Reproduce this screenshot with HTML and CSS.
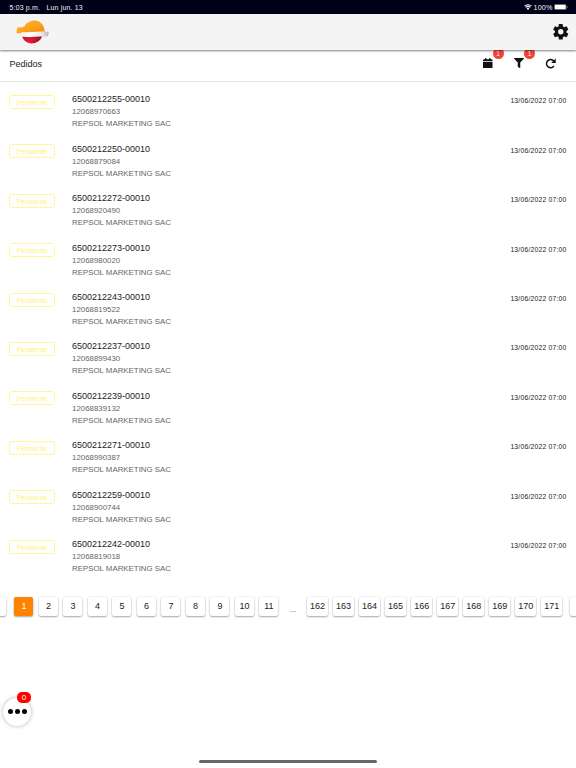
FILE: index.html
```html
<!DOCTYPE html>
<html lang="es">
<head>
<meta charset="utf-8">
<title>Pedidos</title>
<link rel="stylesheet" href="styles.css">
</head>
<body>
<div class="status"><span class="time">5:03 p.m.</span><span>Lun jun. 13</span>
<svg class="wifi" viewBox="0 0 16 12"><path d="M1 4.3a10 10 0 0 1 14 0M3.3 7a6.7 6.7 0 0 1 9.4 0" fill="none" stroke="#fff" stroke-width="2.1"/><path d="M8 12 5.2 9.1a4 4 0 0 1 5.6 0z" fill="#fff"/></svg>
<span class="percent">100%</span>
<svg class="battery" viewBox="0 0 28 12"><rect x=".5" y=".5" width="24" height="11" rx="3" fill="none" stroke="#9a9aa5"/><rect x="1.5" y="1.5" width="22" height="9" rx="2" fill="#fff"/><path d="M26 4v4q1.4-.6 1.4-2T26 4" fill="#9a9aa5"/></svg>
</div>
<header class="header">
<svg class="logo" viewBox="0 0 33 24">
<defs>
<linearGradient id="o" x1="0" y1="0" x2="1" y2="1"><stop offset="0" stop-color="#ffb52a"/><stop offset=".5" stop-color="#fba51c"/><stop offset="1" stop-color="#f28a10"/></linearGradient>
<linearGradient id="w" x1="0" x2="1"><stop offset="0" stop-color="#eee"/><stop offset=".3" stop-color="#fff"/><stop offset=".75" stop-color="#e8e8e8"/><stop offset="1" stop-color="#b5b5b8"/></linearGradient>
<linearGradient id="r" x1="0" x2="1"><stop offset="0" stop-color="#c5122a"/><stop offset=".4" stop-color="#e21b35"/><stop offset="1" stop-color="#8f1022"/></linearGradient>
</defs>
<path d="M1.500 7.500Q4.500 7.700 8.200 6.700C10.200 2.800 14.200.5 18.600.5c5.300 0 9.900 4.100 10.100 11.300L5.500 13.200H.6Q.2 10 1.500 7.500z" fill="url(#o)"/>
<path d="M5.900 15.800H26.300C24.600 21 20.100 23.400 15.800 23.400S7.200 20.900 5.900 15.800z" fill="url(#r)"/>
<path d="M5.200 12.300Q14 12.300 20 11.800t12.800 0q-.1 2.700-1.300 4.700-4-.2-7.500.1-8 .5-17.900.1-1-1.600-.9-4.900z" fill="url(#w)"/>
</svg>
<svg class="gear" viewBox="2 2 20 20"><path fill="#101010" d="M19.43 12.98c.04-.32.07-.64.07-.98s-.03-.66-.07-.98l2.11-1.65c.19-.15.24-.42.12-.64l-2-3.46c-.12-.22-.39-.3-.61-.22l-2.49 1c-.52-.4-1.08-.73-1.69-.98l-.38-2.65A.49.49 0 0 0 14 2h-4c-.25 0-.46.18-.49.42l-.38 2.65c-.61.25-1.17.59-1.69.98l-2.49-1c-.23-.09-.49 0-.61.22l-2 3.46c-.13.22-.07.49.12.64l2.11 1.65c-.04.32-.07.65-.07.98s.03.66.07.98l-2.11 1.65c-.19.15-.24.42-.12.64l2 3.46c.12.22.39.3.61.22l2.49-1c.52.4 1.08.73 1.69.98l.38 2.65c.03.24.24.42.49.42h4c.25 0 .46-.18.49-.42l.38-2.65c.61-.25 1.17-.59 1.69-.98l2.49 1c.23.09.49 0 .61-.22l2-3.46c.12-.22.07-.49-.12-.64zM12 15.5A3.5 3.5 0 1 1 12 8.500a3.500 3.500 0 0 1 0 7z"/></svg>
</header>
<section class="toolbar"><h1>Pedidos</h1>
<div class="tool"><svg class="calendar" viewBox="0 0 448 512" preserveAspectRatio="none"><path fill="#111" d="M0 464a48 48 0 0 0 48 48h352a48 48 0 0 0 48-48V192H0zM448 112a48 48 0 0 0-48-48h-48V12a12 12 0 0 0-12-12h-40a12 12 0 0 0-12 12v52H160V12a12 12 0 0 0-12-12h-40a12 12 0 0 0-12 12v52H48a48 48 0 0 0-48 48v48h448z"/></svg><b class="badge">1</b></div>
<div class="tool"><svg class="filter" viewBox="0 0 512 512"><path fill="#111" d="M488 0H24C2.700 0-8 25.900 7.100 41L192 225.900V432c0 7.800 3.800 15.200 10.200 19.700l80 56C298 518.700 320 507.500 320 488V225.900L505 41C520 25.900 509.300 0 488 0z"/></svg><b class="badge">1</b></div>
<div class="tool"><svg class="reload" viewBox="0 0 24 24"><path d="M19.500 17.500A8.900 8.900 0 1 1 17.500 5L20 7.500" fill="none" stroke="#111" stroke-width="3.400"/><path d="M23.500 1v10h-10z" fill="#111"/></svg></div>
</section>
<main class="orders">
<article><span class="state">Pendiente</span><div class="info"><h2>6500212255-00010</h2><p>12068970663</p><p>REPSOL MARKETING SAC</p></div><time>13/06/2022 07:00</time></article>
<article><span class="state">Pendiente</span><div class="info"><h2>6500212250-00010</h2><p>12068879084</p><p>REPSOL MARKETING SAC</p></div><time>13/06/2022 07:00</time></article>
<article><span class="state">Pendiente</span><div class="info"><h2>6500212272-00010</h2><p>12068920490</p><p>REPSOL MARKETING SAC</p></div><time>13/06/2022 07:00</time></article>
<article><span class="state">Pendiente</span><div class="info"><h2>6500212273-00010</h2><p>12068980020</p><p>REPSOL MARKETING SAC</p></div><time>13/06/2022 07:00</time></article>
<article><span class="state">Pendiente</span><div class="info"><h2>6500212243-00010</h2><p>12068819522</p><p>REPSOL MARKETING SAC</p></div><time>13/06/2022 07:00</time></article>
<article><span class="state">Pendiente</span><div class="info"><h2>6500212237-00010</h2><p>12068899430</p><p>REPSOL MARKETING SAC</p></div><time>13/06/2022 07:00</time></article>
<article><span class="state">Pendiente</span><div class="info"><h2>6500212239-00010</h2><p>12068839132</p><p>REPSOL MARKETING SAC</p></div><time>13/06/2022 07:00</time></article>
<article><span class="state">Pendiente</span><div class="info"><h2>6500212271-00010</h2><p>12068990387</p><p>REPSOL MARKETING SAC</p></div><time>13/06/2022 07:00</time></article>
<article><span class="state">Pendiente</span><div class="info"><h2>6500212259-00010</h2><p>12068900744</p><p>REPSOL MARKETING SAC</p></div><time>13/06/2022 07:00</time></article>
<article><span class="state">Pendiente</span><div class="info"><h2>6500212242-00010</h2><p>12068819018</p><p>REPSOL MARKETING SAC</p></div><time>13/06/2022 07:00</time></article>
</main>
<nav class="pages"><a></a><a class="active">1</a><a>2</a><a>3</a><a>4</a><a>5</a><a>6</a><a>7</a><a>8</a><a>9</a><a>10</a><a>11</a><span class="gap">...</span><a class="wide">162</a><a class="wide">163</a><a class="wide">164</a><a class="wide">165</a><a class="wide">166</a><a class="wide">167</a><a class="wide">168</a><a class="wide">169</a><a class="wide">170</a><a class="wide">171</a><a class="next"></a></nav>
<div class="fab"><i></i><i></i><i></i><b class="count">0</b></div>
<div class="home"></div>
</body>
</html>
```
FILE: styles.css
```css
* { box-sizing: border-box; }
body { margin: 0; height: 768px; overflow: hidden; position: relative; background: #fff; color: #222; font-family: "Liberation Sans", Arial, sans-serif; }
h1, h2, p { margin: 0; font-weight: 400; }
svg { display: block; flex: none; }
.status { height: 14px; background: #000018; color: #f4f4f8; display: flex; align-items: center; padding: 0 8px 0 9.500px; font-size: 6.900px; letter-spacing: .2px; }
.time { margin-right: 6.500px; }
.wifi { width: 8px; height: 6px; margin-left: auto; }
.percent { margin: 0 1.500px 0 2px; font-size: 7.200px; letter-spacing: .15px; }
.battery { width: 14px; height: 6px; }
.header { position: relative; z-index: 2; height: 36px; background: #f4f4f4; box-shadow: 0 1px 2px rgba(0,0,0,.5); display: flex; justify-content: space-between; padding: 0 7.500px 0 16px; }
.logo { width: 33px; height: 24px; margin-top: 5.500px; }
.gear { width: 15.500px; height: 15.500px; margin-top: 10px; }
.toolbar { height: 32px; border-bottom: 1px solid #e2e2e2; display: flex; align-items: center; padding: 0 9.500px 5px 9.500px; }
h1 { font-size: 9px; margin-right: auto; padding-top: 1px; }
.tool { position: relative; width: 31.500px; height: 12px; display: flex; align-items: center; justify-content: center; }
.calendar { width: 9.500px; height: 10.500px; }
.filter { width: 10px; height: 10px; }
.reload { width: 11px; height: 11px; }
.badge { position: absolute; left: 20.500px; top: -9px; width: 11px; height: 11px; border-radius: 50%; background: #f44336; color: #fff; font-size: 6.500px; line-height: 11px; text-align: center; font-weight: 400; }
.orders { padding-top: 5px; }
article { height: 49.420px; display: flex; align-items: flex-start; padding: 0 9.500px 0 9px; }
.state { width: 46px; height: 14px; margin-top: 8px; border: 1px solid #fff59d; border-radius: 2.500px; color: #fff07a; font-size: 6.750px; line-height: 13px; text-align: center; }
.info { margin: 6.400px auto 0 17px; }
h2 { font-size: 9px; line-height: 12px; }
h2 + p { padding-top: 1px; line-height: 12px; }
p { font-size: 7.880px; line-height: 11.500px; color: #666; }
time { margin-top: 9.300px; font-size: 6.800px; line-height: 10px; letter-spacing: .2px; }
.pages { display: flex; margin: 16px 0 0 -12.600px; width: 600px; }
.pages a { flex: none; width: 19px; height: 19px; margin-right: 5.500px; border-radius: 2px; background: #fff; box-shadow: 0 1px 2px rgba(0,0,0,.32), 0 0 2px rgba(0,0,0,.12); font-size: 9px; line-height: 19.500px; text-align: center; }
.pages a:first-child { margin-right: 8px; }
.pages .active { background: #ff8200; color: #fff; }
.pages .wide { width: 21px; margin-right: 5.030px; }
.pages .gap { width: 7px; margin: 7.500px 11px 0 5.500px; font-size: 8px; line-height: 10px; color: #555; }
.pages .next { margin-left: 2.500px; }
.fab { position: absolute; left: 3px; top: 697.500px; width: 28px; height: 28px; border-radius: 50%; background: #fff; box-shadow: 0 0 4px rgba(0,0,0,.3); display: flex; align-items: center; justify-content: center; gap: 2px; }
.fab i { width: 5px; height: 5px; border-radius: 50%; background: #000; }
.count { position: absolute; left: 14px; top: -5.500px; width: 14px; height: 11px; border-radius: 5px; background: #f00; color: #fff; font-size: 8px; line-height: 11px; text-align: center; font-weight: 400; }
.home { position: absolute; left: 199px; top: 760px; width: 178px; height: 3px; border-radius: 2px; background: #666; }
```
